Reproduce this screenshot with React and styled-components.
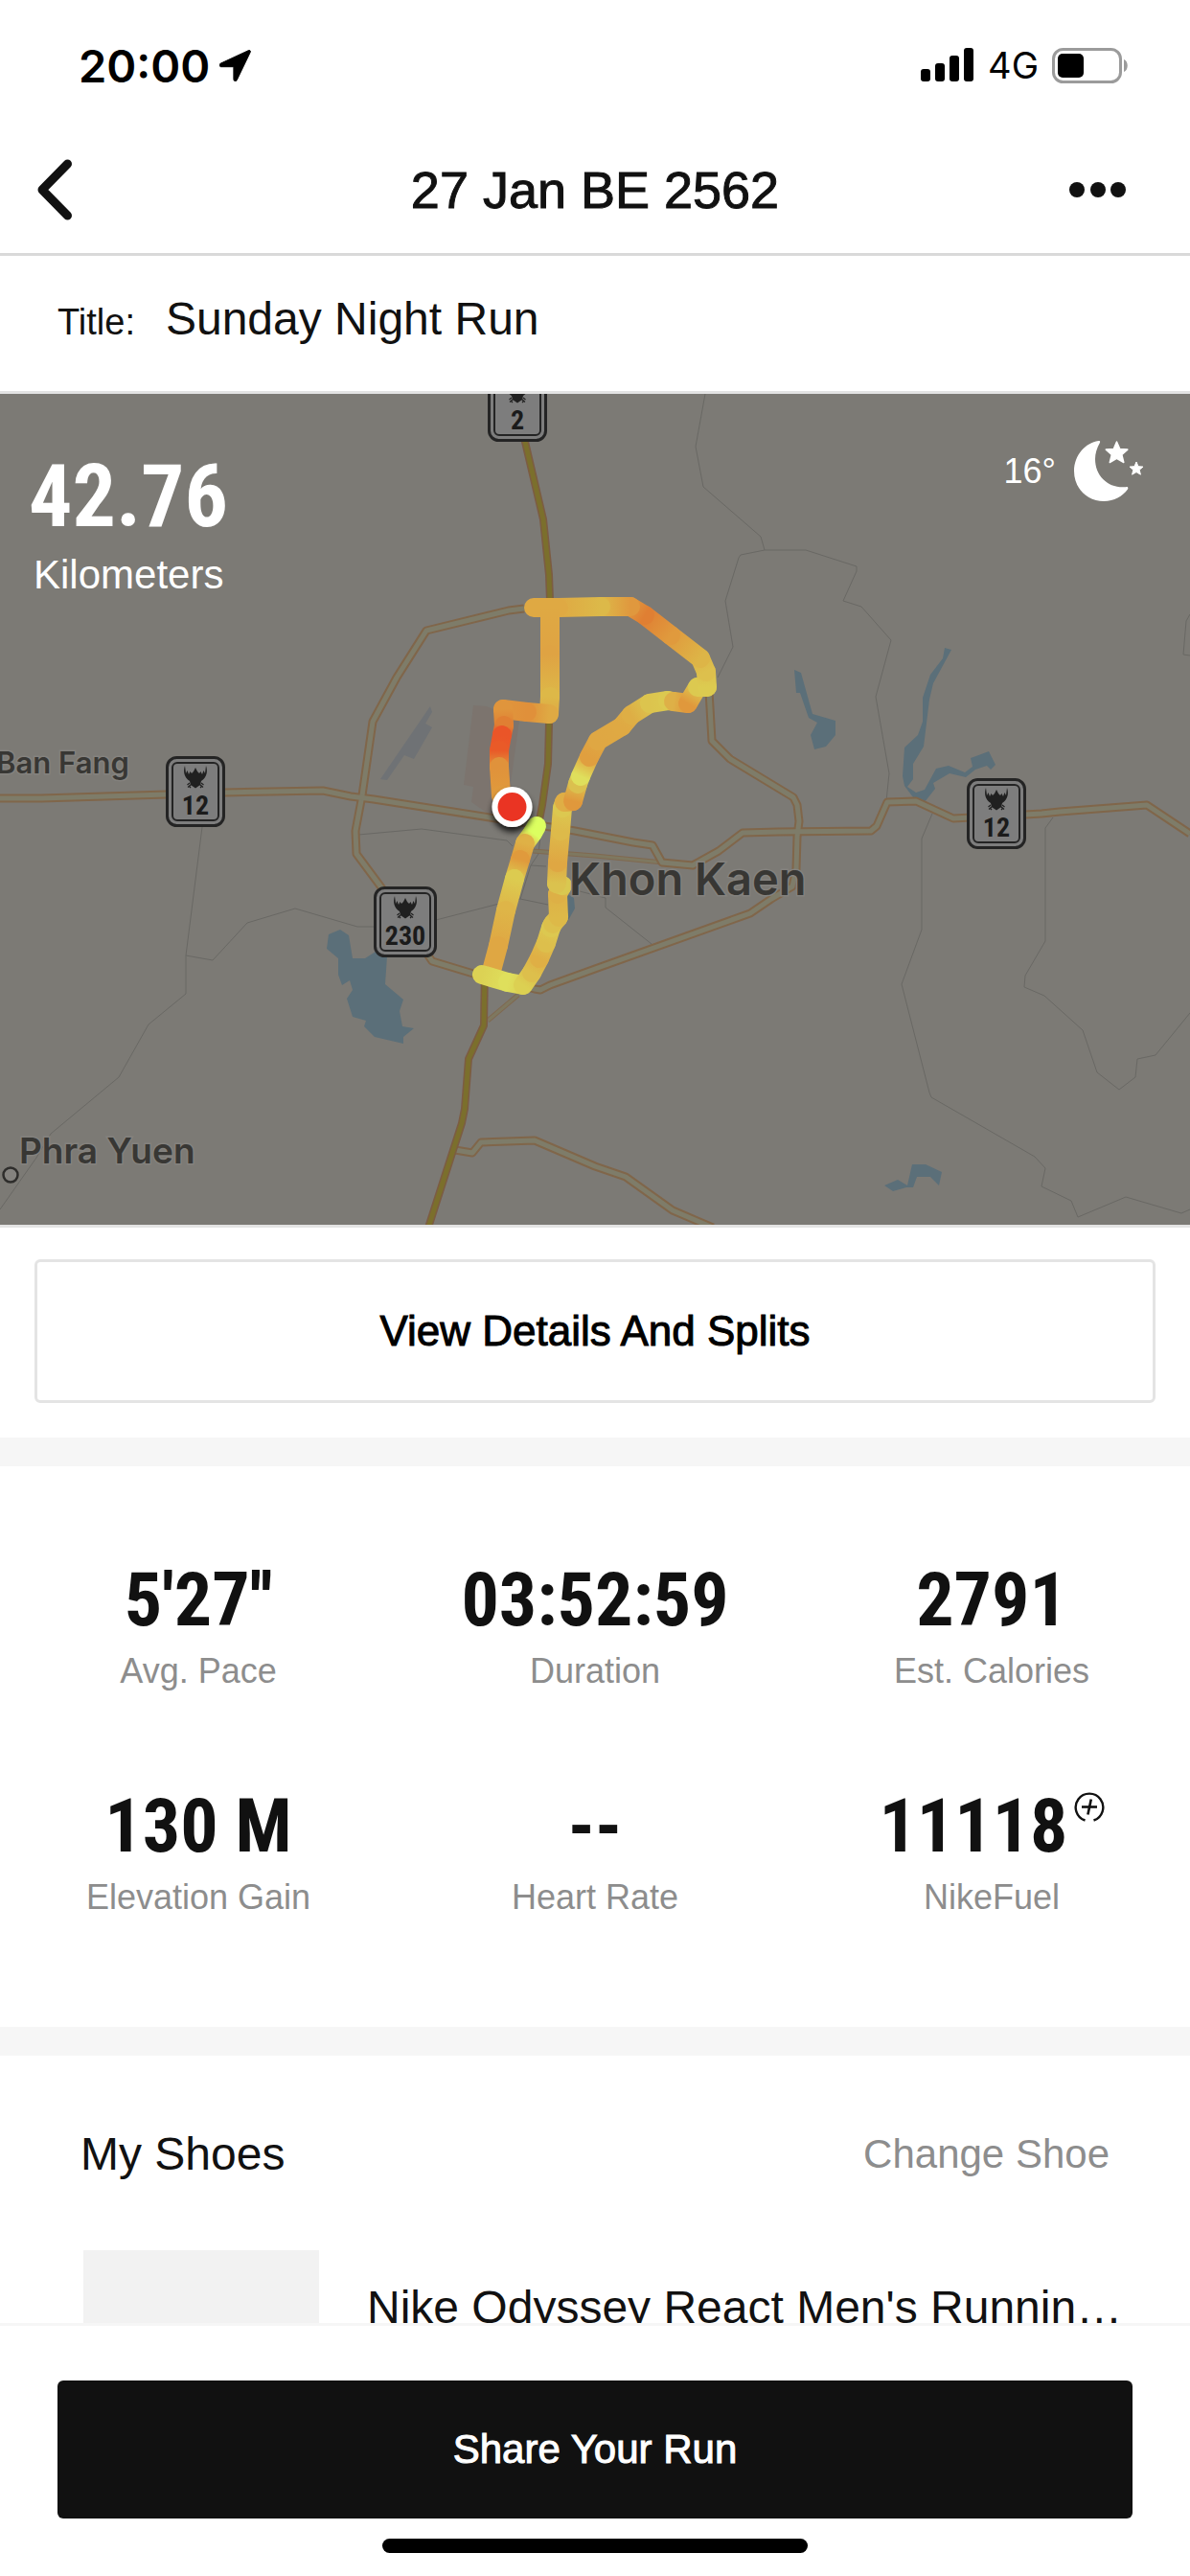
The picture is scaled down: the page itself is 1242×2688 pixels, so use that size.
import React, { useState } from "react";
import styled, { createGlobalStyle } from "styled-components";

const sans = `"Liberation Sans", Arial, sans-serif`;
const condensed = `"Liberation Sans Narrow", "Roboto Condensed", "Liberation Sans", sans-serif`;
const system = `Inter, Roboto, sans-serif`;

const GlobalStyle = createGlobalStyle`
  * {
    box-sizing: border-box;
  }
  body {
    margin: 0;
    background: #fff;
    color: #111;
    font-family: ${sans};
  }
  button, input {
    font-family: inherit;
    color: inherit;
  }
`;

const Screen = styled.div`
  display: flex;
  flex-direction: column;
  height: 100vh;
  overflow: hidden;
`;

const StatusBar = styled.div`
  display: flex;
  align-items: center;
  justify-content: space-between;
  height: 132px;
  padding: 4px 64px 0 82px;
  flex-shrink: 0;
  color: #000;
  font-family: ${system};
`;

const StatusGroup = styled.div`
  display: flex;
  align-items: center;
  gap: ${(p) => p.$gap}px;
`;

const Clock = styled.span`
  font-size: 47px;
  font-weight: 600;
`;

const Network = styled.span`
  font-size: 38px;
`;

const Header = styled.header`
  display: grid;
  grid-template-columns: 120px 1fr 120px;
  align-items: center;
  height: 135px;
  flex-shrink: 0;
  padding: 0 36px;
  border-bottom: 3px solid #d9d9d9;
`;

const IconButton = styled.button`
  display: flex;
  justify-content: ${(p) => (p.$end ? "flex-end" : "flex-start")};
  padding: 0;
  border: 0;
  background: none;
`;

const PageTitle = styled.h1`
  margin: 0;
  font-size: 54px;
  font-weight: 400;
  line-height: 64px;
  text-align: center;
  -webkit-text-stroke: 1px #111;
`;

const Content = styled.main`
  flex: 1;
  min-height: 0;
  overflow: hidden;
`;

const TitleRow = styled.div`
  display: flex;
  align-items: baseline;
  gap: 32px;
  height: 144px;
  padding: 38px 60px 0;
  border-bottom: 3px solid #e3e3e3;
`;

const TitleLabel = styled.label`
  font-size: 38px;
  line-height: 56px;
`;

const TitleInput = styled.input`
  flex: 1;
  min-width: 0;
  height: 56px;
  padding: 0;
  border: 0;
  outline: 0;
  background: none;
  font-size: 48px;
  line-height: 56px;
`;

const MapPanel = styled.section`
  position: relative;
  border-bottom: 3px solid #e3e3e3;
  background: #7c7a75;

  > svg {
    display: block;
    width: 100%;
    height: auto;
  }
`;

const MapOverlay = styled.div`
  position: absolute;
  inset: 0;
  display: flex;
  justify-content: space-between;
  align-items: flex-start;
  padding: 46px 48px 0 30px;
  color: #fff;
`;

const Distance = styled.div`
  padding-top: 14px;
`;

const DistanceValue = styled.div`
  font-family: ${condensed};
  font-size: 90px;
  font-weight: 700;
  line-height: 96px;
`;

const DistanceUnit = styled.div`
  padding: 9px 0 0 5px;
  font-size: 42px;
  line-height: 48px;
`;

const Weather = styled.div`
  display: flex;
  align-items: center;
  gap: 18px;
  font-size: 36px;
  line-height: 70px;
`;

const Details = styled.section`
  padding: 33px 36px 36px;
`;

const OutlineButton = styled.button`
  width: 100%;
  height: 150px;
  border: 3px solid #e4e4e4;
  border-radius: 6px;
  background: #fff;
  color: #000;
  font-size: 44px;
  -webkit-text-stroke: 1px #000;
`;

const Band = styled.div`
  height: 30px;
  background: #f6f6f6;
`;

const Stats = styled.section`
  display: grid;
  grid-template-columns: repeat(3, 1fr);
  row-gap: 100px;
  padding: 100px 0 113px;
`;

const Stat = styled.div`
  display: flex;
  flex-direction: column;
  align-items: center;
  gap: 12px;
`;

const StatValue = styled.div`
  display: flex;
  gap: 6px;
  font-family: ${condensed};
  font-size: 78px;
  font-weight: 700;
  line-height: 80px;

  > svg {
    margin-top: 4px;
  }
`;

const StatLabel = styled.div`
  color: #8d8d8d;
  font-size: 36px;
  line-height: 44px;
`;

const ShoesHead = styled.div`
  display: flex;
  align-items: center;
  justify-content: space-between;
  padding: 75px 84px 72px;
`;

const ShoesTitle = styled.h2`
  margin: 0;
  font-size: 48px;
  font-weight: 400;
  line-height: 56px;
`;

const TextButton = styled.button`
  padding: 0;
  border: 0;
  background: none;
  color: #8d8d8d;
  font-size: 42px;
  line-height: 56px;
`;

const Shoe = styled.div`
  display: flex;
  gap: 50px;
  padding: 0 60px 0 87px;
`;

const ShoeImage = styled.div`
  width: 246px;
  height: 246px;
  flex-shrink: 0;
  background: #f2f2f2;
`;

const ShoeName = styled.div`
  padding-top: 32px;
  overflow: hidden;
  font-size: 48px;
  line-height: 56px;
  white-space: nowrap;
`;

const Footer = styled.footer`
  display: flex;
  flex-direction: column;
  align-items: center;
  flex-shrink: 0;
  padding: 57px 60px 24px;
  border-top: 3px solid #f6f6f6;
`;

const ShareButton = styled.button`
  width: 100%;
  height: 144px;
  border: 0;
  border-radius: 6px;
  background: #111;
  color: #fff;
  font-size: 42px;
  -webkit-text-stroke: 1px #fff;
`;

const HomeIndicator = styled.div`
  width: 444px;
  height: 15px;
  margin-top: 21px;
  border-radius: 8px;
  background: #000;
`;

const LocationIcon = () => (
  <svg width="33" height="33" viewBox="0 0 33 33">
    <path
      d="M30.500 .6 1.200 14.200c-1.800.9-1.400 3.500.7 3.500h12.200c.5 0 .8.300.8.800v12.200c0 2.200 2.500 2.700 3.400.7L32.300 2.300c.5-1.200-.6-2.200-1.800-1.700z"
      fill="#000"
      stroke="#000"
      strokeLinejoin="round"
    />
  </svg>
);

const SignalIcon = () => (
  <svg width="56" height="36" viewBox="0 0 56 36">
    <rect x="0" y="22" width="10" height="13" rx="3" />
    <rect x="15" y="16" width="10" height="19" rx="3" />
    <rect x="30" y="8" width="10" height="27" rx="3" />
    <rect x="45" y="0" width="10" height="35" rx="3" />
  </svg>
);

const BatteryIcon = () => (
  <svg width="80" height="37" viewBox="0 0 80 37">
    <rect x="1.500" y="1.500" width="70" height="34" rx="10" fill="none" stroke="#9b9b9b" strokeWidth="3" />
    <rect x="6" y="6" width="27" height="25" rx="5" />
    <path d="M75 12c5 2 5 11 0 13z" fill="#9b9b9b" />
  </svg>
);

const BackIcon = () => (
  <svg width="42" height="64" viewBox="0 0 42 64">
    <path d="M34.500 5 8 32l26.500 27" fill="none" stroke="#111" strokeWidth="9" strokeLinecap="round" strokeLinejoin="round" />
  </svg>
);

const MoreIcon = () => (
  <svg width="90" height="16" viewBox="0 0 90 16">
    <circle cx="8" cy="8" r="8" fill="#111" />
    <circle cx="30" cy="8" r="8" fill="#111" />
    <circle cx="51" cy="8" r="8" fill="#111" />
  </svg>
);

const MoonIcon = () => (
  <svg width="74" height="66" viewBox="0 0 74 66" fill="#fff">
    <path d="M26.500 1C13 3 1 16 1 32.500 1 51 15 64 32 64c11 0 19.500-5 25-12.500 .8-1.500 0-2.700-1.800-2.300C37 51 23 38 23 20c0-6 1.800-11.500 4.800-16.800C28.600 1.700 28 .8 26.500 1z" />
    <path
      d="M45.500 2l3.300 7.500 8 .6-6 5.400 2 8-7.300-4.200-7.200 4.200 2-8-6-5.400 8-.6z"
      stroke="#fff"
      strokeWidth="1.500"
      strokeLinejoin="round"
    />
    <path d="M66 23l2 4.700 5 .4-3.800 3.200 1.200 4.900-4.400-2.600-4.400 2.600 1.200-4.900-3.800-3.200 5-.4z" stroke="#fff" strokeLinejoin="round" />
  </svg>
);

const FuelIcon = () => (
  <svg width="32" height="32" viewBox="0 0 32 32" fill="none" stroke="#111" strokeLinecap="butt">
    <path d="M11.500 29.500a14.300 14.300 0 1 1 9 0" strokeWidth="2.400" />
    <path d="M8 15.500h16" strokeWidth="2.600" />
    <path d="M17.800 7.500l-3.400 16" strokeWidth="2.600" />
  </svg>
);

const mainRoads = [
  "M547 224 531 226 445 247 414 296 389 342 378 419 371 456 372 480 398 515 451 592 494 605 558 621 564 622 574 617 621 600 783 542 805 527 827 514 831 496 832 462 834 446 832 429 828 421 762 381 743 362 740 310",
  "M0 422 43 422 174 418 234 416 337 414 366 420 390 423 511 442 600 456 661 468 681 471 691 489 723 492 750 477 775 458 813 457 909 456 915 451 926 426 956 425 995 443 1070 439 1087 438 1106 436 1197 429 1242 459",
  "M475 789 493 792 502 781 558 779 621 806 653 817 702 852 744 870",
];

const highways = [
  "M540 0 548 50 567 131 573 189 574 216 573 344 572 386 566 429 560 460",
  "M506 600 505 659 489 694 485 746 482 761 447 870",
];

const smallRoads = ["M556 477 621 482 692 489", "M541 627 509 654"];

const boundaries = [
  "M736 0 726 55 734 97 794 149 798 163 841 163 894 180 894 185 880 216 899 222 930 257 914 316 928 396 925 425",
  "M798 163 773 168 771 171 757 216 765 264 749 296",
  "M1242 230 1238 237 1235 272 1242 273",
  "M973 438 962 464 962 559 941 616 970 729 972 734 1080 796 1091 808 1087 827 1118 842 1125 859 1175 838 1233 855 1242 851",
  "M1099 442 1091 453 1091 571 1070 607 1069 619 1090 628 1130 664 1145 708 1168 726 1185 713 1187 694 1206 690 1242 646",
  "M605 519 632 526 632 536 680 574",
  "M211 452 194 586 194 626 155 658 124 713 53 772 38 797 0 851",
  "M194 586 222 591 258 552 308 537 373 556 392 556",
  "M455 549 517 533 543 527 572 533",
  "M374 460 440 454 529 466 535 472",
  "M564 461 562 480 554 492 543 527",
  "M554 492 570 493",
];

const lakes = [
  "M343 564 355 559 364 565 368 589 381 589 392 582 404 587 402 616 421 632 417 644 420 660 432 662 421 671 421 678 391 671 380 660 382 654 368 650 362 631 368 622 365 612 357 617 353 606 353 589 341 579z",
  "M592 522 599 526 600 537 592 551z",
  "M829 288 836 291 848 334 872 341 872 356 862 368 850 371 846 356 853 343 844 338 835 312 831 312z",
  "M986 265 993 267 974 302 970 319 964 368 953 386 953 402 947 410 956 416 965 413 977 391 990 388 1007 395 1015 389 1013 380 1032 373 1039 387 1034 392 1030 388 1018 392 1008 400 991 396 974 406 976 412 965 426 953 421 944 409 942 399 944 369 958 356 963 342 963 317 971 293 984 276z",
  "M923 826 937 820 947 826 952 804 966 804 983 812 980 826 971 817 957 817 953 828 946 828 932 832z",
];

// [x, y, pace colour] for every sampled point of the run
const routes = [
  [
    [560, 451, "#dcff60"],
    [556, 458, "#dcff60"],
    [548, 469, "#dfb146"],
    [543, 486, "#e09a3c"],
    [537, 506, "#dccb50"],
    [528, 539, "#deb548"],
    [520, 576, "#dfa743"],
    [513, 602, "#dfa743"],
  ],
  [
    [503, 606, "#dcd254"],
    [530, 614, "#dfdf5c"],
    [546, 617, "#dcd052"],
    [555, 604, "#ddbf4c"],
    [563, 589, "#dfaf45"],
    [570, 573, "#ddbf4c"],
    [575, 557, "#dcc850"],
    [577, 553, "#dcc04c"],
    [583, 546, "#ddb948"],
    [582, 522, "#ddb046"],
    [587, 513, "#d9c850"],
    [581, 511, "#dbc24e"],
    [582, 489, "#dfa743"],
    [585, 456, "#ddba4a"],
    [587, 432, "#dcc850"],
    [589, 426, "#dfae45"],
    [598, 425, "#e0983c"],
    [603, 407, "#dbc04e"],
    [606, 399, "#dfdf5c"],
    [615, 379, "#e09f3f"],
    [624, 362, "#dfa743"],
    [649, 347, "#dfa943"],
    [659, 335, "#deae45"],
    [678, 323, "#dcc44e"],
    [697, 320, "#dcc950"],
    [703, 321, "#deb047"],
    [718, 323, "#e0983c"],
    [728, 306, "#dcc950"],
    [738, 306, "#dccb50"],
    [737, 290, "#ddc04d"],
    [731, 276, "#ddb547"],
    [700, 252, "#e09a3d"],
    [673, 231, "#e07f33"],
    [658, 222, "#e0983e"],
    [627, 222, "#dcb949"],
    [583, 223, "#dfa943"],
    [557, 223, "#dfa943"],
  ],
  [
    [574, 223, "#dfa943"],
    [574, 272, "#dfa343"],
    [574, 316, "#ddb848"],
    [573, 334, "#dfa943"],
    [550, 332, "#e0903a"],
    [525, 329, "#e0953c"],
    [526, 346, "#e07f33"],
    [524, 356, "#ea5528"],
    [521, 372, "#e95a28"],
    [521, 389, "#e0923b"],
    [523, 419, "#e09a3c"],
    [532, 428, "#e09a3c"],
  ],
];

const Route = ({ points, id }) => (
  <g strokeWidth="20" strokeLinecap="round">
    {points.slice(1).map(([x, y, color], i) => {
      const [px, py, prev] = points[i];
      const gradient = `pace-${id}-${i}`;
      return (
        <g key={gradient}>
          <linearGradient id={gradient} gradientUnits="userSpaceOnUse" x1={px} y1={py} x2={x} y2={y}>
            <stop offset="0" stopColor={prev} />
            <stop offset="1" stopColor={color} />
          </linearGradient>
          <path d={`M${px} ${py}L${x} ${y}`} stroke={`url(#${gradient})`} />
        </g>
      );
    })}
  </g>
);

const Shield = ({ x, y, width = 62, children }) => (
  <g transform={`translate(${x} ${y})`}>
    <rect x="1.500" y="1.500" width={width - 3} height="71" rx="10" fill="#7d7d7d" stroke="#242424" strokeWidth="3" />
    <rect x="7" y="7" width={width - 14} height="60" rx="5" fill="none" stroke="#242424" strokeWidth="2" />
    <g transform={`translate(${width / 2 - 12} 10)`} fill="#202020">
      <path d="M1 0C-1 6 0 12 6 16L7 20 12 23.500 17 20 18 16C24 12 25 6 23 0L22 8 20.500 5 19 9 17.500 6 16 8 14 6 12 2 10 6 8 8 6.500 6 5 9 3.500 5 2 8z" />
      <path d="M6 18 3.500 20M5 21 7 23M7.500 19.500 4 22.500M18 18 20.500 20M19 21 17 23M16.500 19.500 20 22.500" stroke="#202020" strokeWidth="1.200" />
    </g>
    <text x={width / 2} y="61" textAnchor="middle" fontFamily={condensed} fontSize="28" fontWeight="700" fill="#1b1b1b">
      {children}
    </text>
  </g>
);

const RunMap = () => (
  <svg viewBox="0 0 1242 867" fill="none">
    <defs>
      <filter id="pin-shadow" x="-50%" y="-50%" width="200%" height="200%">
        <feDropShadow dx="0" dy="5" stdDeviation="3" floodColor="#000" floodOpacity="0.8" />
      </filter>
    </defs>
    <rect width="1242" height="867" fill="#7c7a75" />
    <path d="M494 325 508 326 542 341 533 406 537 415 528 437 508 437 492 426 494 410 484 408z" fill="#7c746e" />
    <path d="M397 402 449 326 451 332 444 344 451 348 432 381 422 377 404 403z" fill="#6f7275" />
    {lakes.map((d) => (
      <path key={d} d={d} fill="#5b6f79" />
    ))}
    {boundaries.map((d) => (
      <path key={d} d={d} stroke="#696864" />
    ))}
    {smallRoads.map((d) => (
      <g key={d}>
        <path d={d} stroke="#806950" strokeWidth="5" />
        <path d={d} stroke="#7e7860" strokeWidth="3" />
      </g>
    ))}
    <g strokeLinejoin="round">
      {mainRoads.map((d) => (
        <path key={d} d={d} stroke="#80664a" strokeWidth="9" />
      ))}
      {mainRoads.map((d) => (
        <path key={d} d={d} stroke="#7e7c69" strokeWidth="5" />
      ))}
      {highways.map((d) => (
        <g key={d}>
          <path d={d} stroke="#7c5c43" strokeWidth="8" />
          <path d={d} stroke="#7b6f2c" strokeWidth="5" />
        </g>
      ))}
    </g>
    <Shield x={509} y={-24}>2</Shield>
    <Shield x={173} y={378}>12</Shield>
    <Shield x={1009} y={401}>12</Shield>
    <Shield x={390} y={514} width={66}>230</Shield>
    {routes.map((points, i) => (
      <Route key={i} points={points} id={i} />
    ))}
    <g fontFamily={system} fontWeight="600" fill="#383734" stroke="#84827e" strokeWidth="3" paintOrder="stroke">
      <text x="-4" y="396" fontSize="31">Ban Fang</text>
      <text x="594" y="523" fontSize="47">Khon Kaen</text>
      <text x="20" y="803" fontSize="37">Phra Yuen</text>
    </g>
    <circle cx="11" cy="815" r="7.500" fill="#84827e" stroke="#2e2d2b" strokeWidth="2.500" />
    <circle cx="534.500" cy="431" r="21" fill="#fff" filter="url(#pin-shadow)" />
    <circle cx="534.500" cy="431" r="15" fill="#ea3423" />
  </svg>
);

const stats = [
  { value: "5'27''", label: "Avg. Pace" },
  { value: "03:52:59", label: "Duration" },
  { value: "2791", label: "Est. Calories" },
  { value: "130 M", label: "Elevation Gain" },
  { value: "--", label: "Heart Rate" },
  { value: "11118", label: "NikeFuel", icon: <FuelIcon /> },
];

const App = () => {
  const [title, setTitle] = useState("Sunday Night Run");

  return (
    <Screen>
      <GlobalStyle />
      <StatusBar>
        <StatusGroup $gap={10}>
          <Clock>20:00</Clock>
          <LocationIcon />
        </StatusGroup>
        <StatusGroup $gap={14}>
          <SignalIcon />
          <Network>4G</Network>
          <BatteryIcon />
        </StatusGroup>
      </StatusBar>

      <Header>
        <IconButton aria-label="Back">
          <BackIcon />
        </IconButton>
        <PageTitle>27 Jan BE 2562</PageTitle>
        <IconButton $end aria-label="More">
          <MoreIcon />
        </IconButton>
      </Header>

      <Content>
        <TitleRow>
          <TitleLabel htmlFor="run-title">Title:</TitleLabel>
          <TitleInput id="run-title" value={title} onChange={(e) => setTitle(e.target.value)} />
        </TitleRow>

        <MapPanel>
          <RunMap />
          <MapOverlay>
            <Distance>
              <DistanceValue>42.76</DistanceValue>
              <DistanceUnit>Kilometers</DistanceUnit>
            </Distance>
            <Weather>
              16°
              <MoonIcon />
            </Weather>
          </MapOverlay>
        </MapPanel>

        <Details>
          <OutlineButton>View Details And Splits</OutlineButton>
        </Details>
        <Band />

        <Stats>
          {stats.map(({ value, label, icon }) => (
            <Stat key={label}>
              <StatValue>
                {value}
                {icon}
              </StatValue>
              <StatLabel>{label}</StatLabel>
            </Stat>
          ))}
        </Stats>
        <Band />

        <ShoesHead>
          <ShoesTitle>My Shoes</ShoesTitle>
          <TextButton>Change Shoe</TextButton>
        </ShoesHead>
        <Shoe>
          <ShoeImage />
          <ShoeName>Nike Odyssey React Men's Runnin…</ShoeName>
        </Shoe>
      </Content>

      <Footer>
        <ShareButton>Share Your Run</ShareButton>
        <HomeIndicator />
      </Footer>
    </Screen>
  );
};

export default App;
